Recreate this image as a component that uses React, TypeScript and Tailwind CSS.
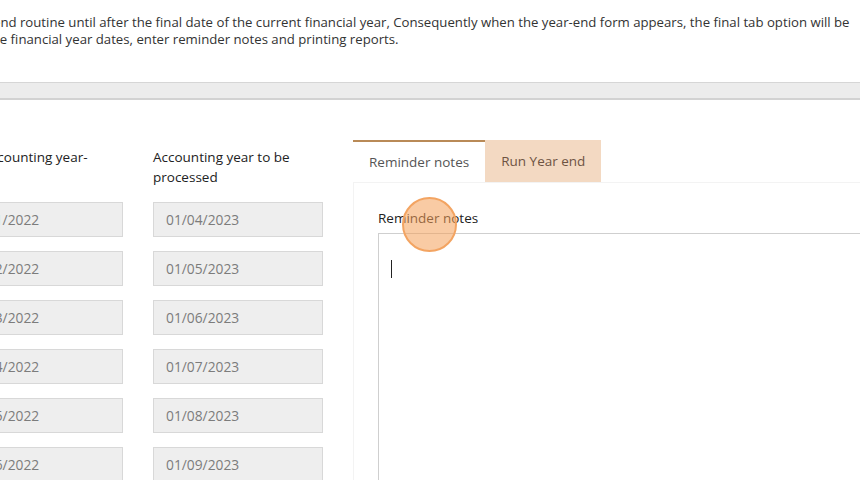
import React from "react";

const lastYear = ["01/01/2022", "01/02/2022", "01/03/2022", "01/04/2022", "01/05/2022", "01/06/2022"];
const nextYear = ["01/04/2023", "01/05/2023", "01/06/2023", "01/07/2023", "01/08/2023", "01/09/2023"];

function DateField({ value }: { value: string }) {
  return (
    <input
      readOnly
      value={value}
      className="block h-[35px] w-[170px] border border-[#d8d8d8] bg-[#eeeeee] px-[12px] text-[13.8px] text-[#7c7c7c] outline-none"
    />
  );
}

export default function App() {
  return (
    <div className="relative h-[480px] w-[860px] overflow-hidden bg-white font-['Open_Sans',sans-serif] text-[13.5px] text-[#333]">
      <div className="whitespace-nowrap pt-[14px] text-[13.2px] leading-[17px]">
        <p className="ml-[-38px]">
          year-end routine until after the final date of the current financial year, Consequently when the year-end form appears, the final tab option will be
        </p>
        <p className="ml-[-13px]">
          the financial year dates, enter reminder notes and printing reports.
        </p>
      </div>

      <div className="mt-[34px] h-[18px] border-t border-[#d6d6d6] border-b-2 border-b-[#d2d2d2] bg-[#ececec]" />

      <div className="ml-[-47px] mt-[40px] flex items-start">
        <div className="w-[170px] pt-[7px]">
          <div className="mb-[15px] h-[40px] w-[140px] leading-[20px] text-[#222]">Last Accounting year-end</div>
          <div className="flex flex-col gap-[14px]">
            {lastYear.map((d) => (
              <DateField key={d} value={d} />
            ))}
          </div>
        </div>
        <div className="ml-[30px] w-[170px] pt-[7px]">
          <div className="mb-[15px] h-[40px] leading-[20px] text-[#222]">Accounting year to be processed</div>
          <div className="flex flex-col gap-[14px]">
            {nextYear.map((d) => (
              <DateField key={d} value={d} />
            ))}
          </div>
        </div>

        <div className="ml-[30px] w-[560px] shrink-0">
          <div className="flex h-[42px] whitespace-nowrap">
            <div className="flex items-center border-t-2 border-[#b98a57] bg-white px-[16px] text-[#555]">
              Reminder notes
            </div>
            <div className="flex items-center bg-[#f3d9c2] px-[16px] text-[#6e5442]">
              Run Year end
            </div>
          </div>
          <div className="h-[320px] border border-[#f3f3f3] pl-[24px] pt-[25px]">
            <div className="mb-[5px] leading-[20px] text-[#222]">Reminder notes</div>
            <div className="h-[300px] border border-[#cfcfcf] pl-[12px] pt-[26px]">
              <span className="block h-[18px] w-px bg-[#222]" />
            </div>
          </div>
        </div>
      </div>

      <div className="absolute left-[402px] top-[197px] h-[55px] w-[55px] rounded-full border-2 border-[#f3a462] bg-[#f4a05a]/55" />
    </div>
  );
}
